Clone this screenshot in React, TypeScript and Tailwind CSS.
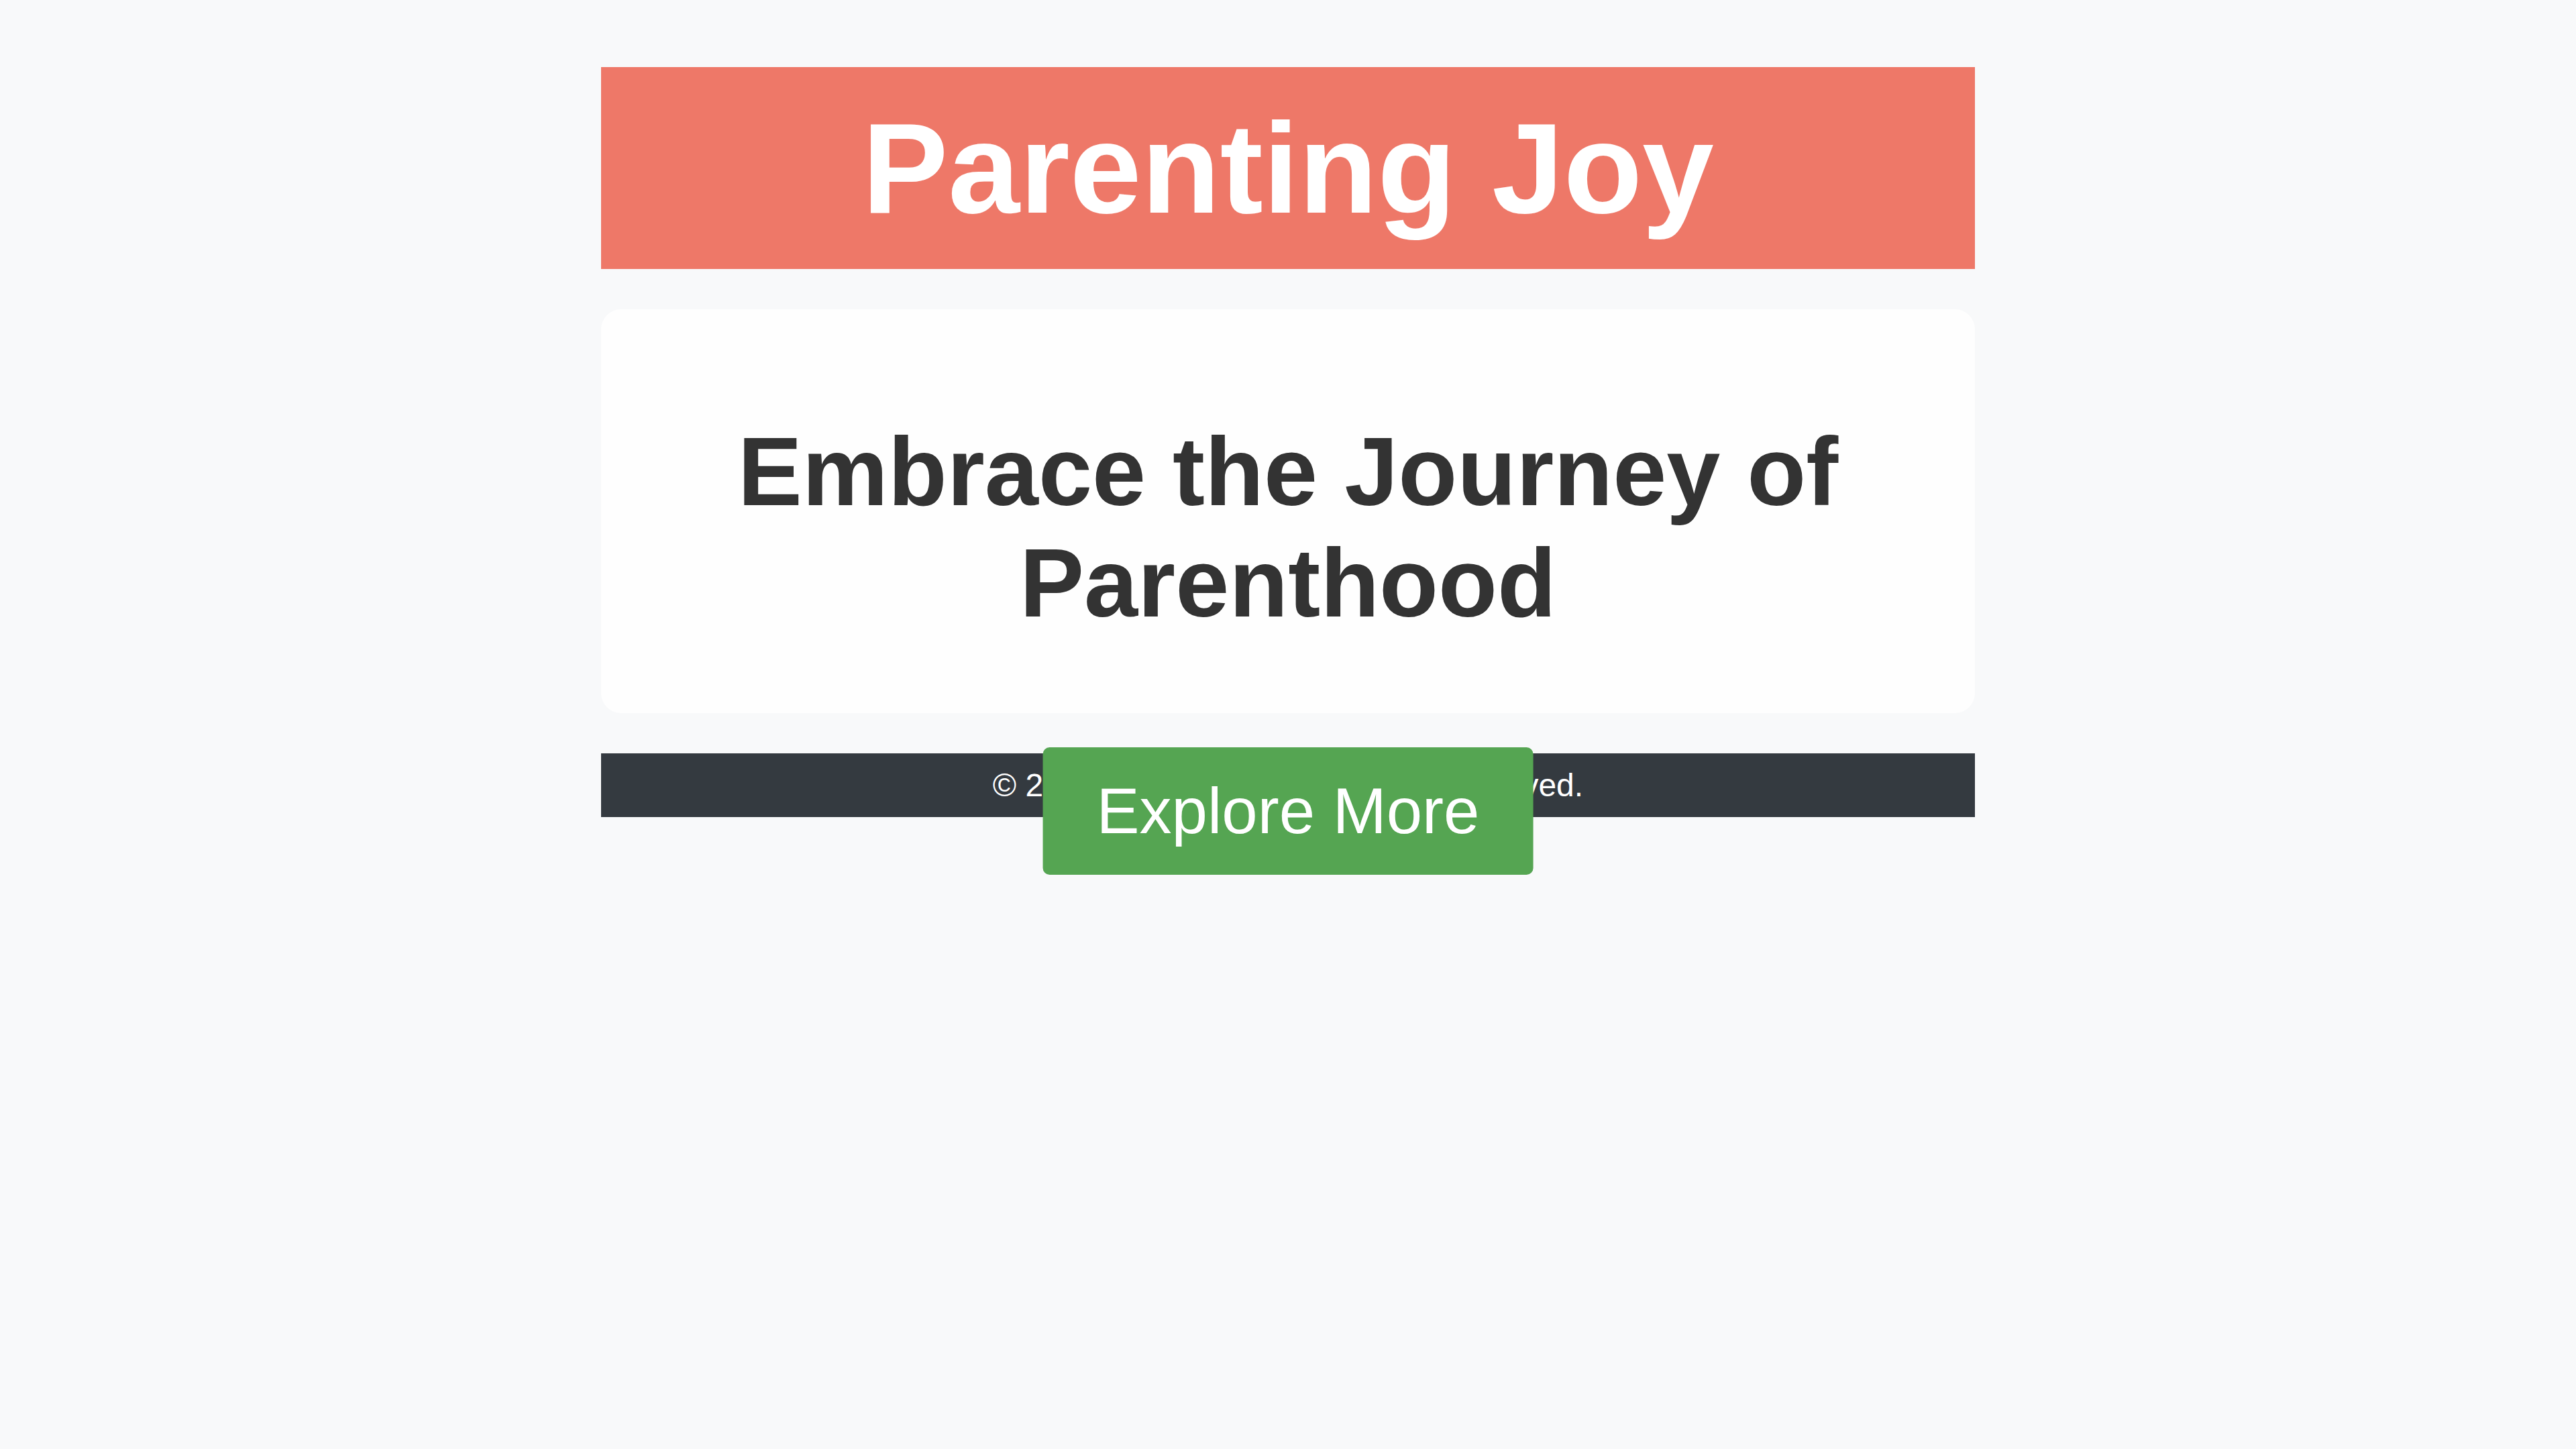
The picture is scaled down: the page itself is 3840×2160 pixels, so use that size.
import React from 'react';

const Header = () => (
  <header className="bg-[#ee7868] py-[40px] text-center">
    <h1 className="text-[192px] font-bold leading-[normal] text-white">Parenting Joy</h1>
  </header>
);

const Hero = () => (
  <section className="relative mt-[60px] rounded-[30px] bg-[#fefefe] pt-[160px] pb-[110px] text-center">
    <h2 className="text-[144px] font-bold leading-[normal] text-[#333333]">
      Embrace the Journey of
      <br />
      Parenthood
    </h2>
    {/* ボタンはフッターに重なる位置 */}
    <button
      type="button"
      className="absolute left-1/2 top-[calc(100%+51px)] -translate-x-1/2 cursor-pointer rounded-[10px] bg-[#55a552] px-[80px] py-[40px] text-[96px] leading-[normal] whitespace-nowrap text-white"
    >
      Explore More
    </button>
  </section>
);

const Footer = () => (
  <footer className="mt-[60px] bg-[#343a40] py-[20px] text-center text-[48px] leading-[normal] text-white">
    © 2024 Parenting Joy. All rights reserved.
  </footer>
);

export default function App() {
  return (
    <div
      className="min-h-screen bg-[#f8f9fa] pt-[100px]"
      style={{ fontFamily: '"Liberation Sans", Arial, sans-serif' }}
    >
      <div className="mx-auto w-[2048px]">
        <Header />
        <Hero />
        <Footer />
      </div>
    </div>
  );
}
